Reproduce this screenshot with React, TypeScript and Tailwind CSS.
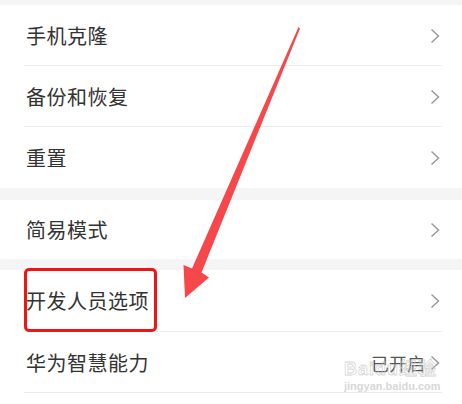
import { ReactNode } from 'react';

const font = { fontFamily: '"Noto Sans CJK SC", "Noto Sans", sans-serif' };

function Chevron() {
  return (
    <svg width="10" height="16" viewBox="0 0 10 16" className="shrink-0">
      <path d="M1.5 1.5 L8.5 8 L1.5 14.5" fill="none" stroke="#9a9a9a" strokeWidth="1.5" />
    </svg>
  );
}

function Row({ label, value, divider, h }: { label: string; value?: string; divider?: boolean; h: string }) {
  return (
    <div className={`relative flex items-center pl-[26px] pr-[22px] ${h}`}>
      <span className="text-[20px] leading-none text-[#333333] tracking-[0.5px]">{label}</span>
      <div className="ml-auto flex items-center gap-[4px]">
        {value && <span className="text-[18px] leading-none text-[#555555] mr-[1px]">{value}</span>}
        <Chevron />
      </div>
      {divider && <div className="absolute left-[24px] right-[20px] bottom-0 h-px bg-[#ededed]" />}
    </div>
  );
}

function Group({ children }: { children: ReactNode }) {
  return <div className="bg-white">{children}</div>;
}

export default function App() {
  return (
    <div className="relative w-[462px] h-[404px] overflow-hidden bg-[#f5f5f5]" style={font}>
      <div className="flex flex-col pt-[5px]">
        <Group>
          <Row label="手机克隆" divider h="h-[61px]" />
          <Row label="备份和恢复" divider h="h-[61px]" />
          <Row label="重置" h="h-[61px]" />
        </Group>
        <div className="h-[12px]" />
        <Group>
          <Row label="简易模式" h="h-[59px]" />
        </Group>
        <div className="h-[11px]" />
        <Group>
          <Row label="开发人员选项" divider h="h-[62px]" />
          <Row label="华为智慧能力" value="已开启" divider h="h-[61px]" />
          <div className="h-[20px]" />
        </Group>
      </div>

      {/* highlight box */}
      <div className="absolute left-[24px] top-[268px] w-[133px] h-[64px] border-[3px] border-[#f01414] rounded-[5px]" />

      {/* arrow */}
      <svg className="absolute inset-0" width="462" height="404" viewBox="0 0 462 404">
        <polygon
          points="298.5,27 300,28.5 201.5,272.5 209,277.5 185,298 183.5,265 192,268.5"
          fill="#f6474b"
        />
      </svg>

      {/* watermark */}
      <div className="absolute left-[344px] top-[360px] flex flex-col items-start leading-none">
        <span
          className="text-[18px] font-bold text-transparent tracking-[1px]"
          style={{ WebkitTextStroke: '0.8px rgba(200,200,200,0.75)', fontFamily: '"Liberation Sans", "Noto Sans CJK SC", sans-serif' }}
        >
          Baidu经验
        </span>
        <span
          className="mt-[3px] text-[11px] text-[rgba(205,205,205,0.8)] font-bold"
          style={{ fontFamily: '"Liberation Sans", sans-serif' }}
        >
          jingyan.baidu.com
        </span>
      </div>
    </div>
  );
}
